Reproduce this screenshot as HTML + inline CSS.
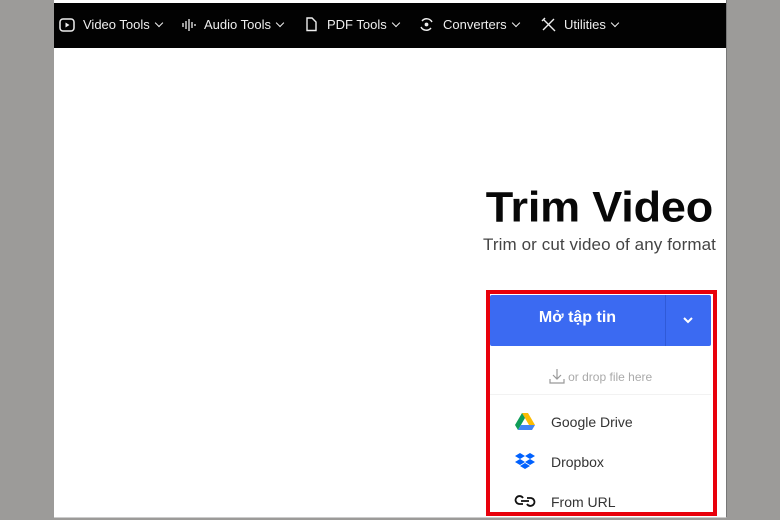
<!DOCTYPE html>
<html><head><style>
body{margin:0;width:780px;height:520px;background:#9c9b99;position:relative;overflow:hidden;font-family:"Liberation Sans",sans-serif}
.page{position:absolute;left:54px;top:0;width:672px;height:517px;background:#fff;border-right:1px solid #777;border-bottom:1px solid #ccc}
.nav{position:absolute;left:0;top:3px;width:672px;height:45px;background:#020202;color:#eee;font-size:13px}
.nav span{position:absolute;top:14px;white-space:nowrap}
.nav svg{position:absolute}
.nav i{display:inline-block;width:5px;height:5px;border-right:1.2px solid #eee;border-bottom:1.2px solid #eee;transform:rotate(45deg);margin-left:6px;vertical-align:3px}
h1{position:absolute;right:13px;top:181px;margin:0;font-size:45px;font-weight:bold;color:#080808;letter-spacing:-0.2px;transform:scaleY(0.95)}
.sub{position:absolute;right:10px;top:235px;font-size:17px;color:#444;letter-spacing:0.1px}
.red{position:absolute;left:486px;top:290px;width:223px;height:218px;border:4px solid #e8000b;background:#fff}
.btn{position:absolute;left:0;top:1px;width:221px;height:51px;background:#3b6af2;border-radius:2px}
.btn .t{position:absolute;left:0;width:175px;top:14px;text-align:center;color:#fff;font-weight:bold;font-size:16px}
.btn .d{position:absolute;left:175px;top:0;width:1px;height:51px;background:#2f5ad8}
.drop{position:absolute;left:0;width:221px;top:74px;text-align:center;color:#aaa;font-size:12px}
.it{position:absolute;left:61px;font-size:14px;color:#333}
</style></head><body>
<div class="page">
<div class="nav">
<svg style="left:5px;top:15px" width="16" height="14" viewBox="0 0 16 14"><rect x="1" y="1" width="14" height="12" rx="3" fill="none" stroke="#eee" stroke-width="1.5"/><path d="M6.5 4.5v5l4-2.5z" fill="#eee"/></svg>
<span style="left:29px">Video Tools<i></i></span>
<svg style="left:128px;top:15px" width="14" height="14" viewBox="0 0 14 14" stroke="#eee" stroke-width="1.3"><path d="M1 5v4M4 3v8M7 1v12M10 4v6M13 6v2"/></svg>
<span style="left:150px">Audio Tools<i></i></span>
<svg style="left:251px;top:14px" width="13" height="15" viewBox="0 0 13 15"><path d="M2 1h5l4 4v8.5H2z" fill="none" stroke="#eee" stroke-width="1.4"/></svg>
<span style="left:273px">PDF Tools<i></i></span>
<svg style="left:365px;top:14px" width="15" height="15" viewBox="0 0 15 15" fill="none" stroke="#eee" stroke-width="1.4"><path d="M3 4A6 6 0 0 1 13 5M12 11A6 6 0 0 1 2 10"/><circle cx="7.5" cy="7.5" r="1.2" fill="#eee"/></svg>
<span style="left:389px">Converters<i></i></span>
<svg style="left:487px;top:14px" width="15" height="15" viewBox="0 0 15 15" fill="none" stroke="#eee" stroke-width="1.4"><path d="M2 2l11 11M13 2L2 13M1 4l3-3M11 11l3 3"/></svg>
<span style="left:510px">Utilities<i></i></span>
</div>
<h1>Trim Video</h1>
<div class="sub">Trim or cut video of any format</div>
</div>
<div class="red">
<div class="btn"><div class="t">Mở tập tin</div><div class="d"></div>
<svg style="position:absolute;left:192px;top:21px" width="12" height="8" viewBox="0 0 12 8"><path d="M2 2l4 4 4-4" fill="none" stroke="#fff" stroke-width="2"/></svg></div>
<div class="drop"><svg width="16" height="16" viewBox="0 0 16 16" style="vertical-align:-3px" fill="none" stroke="#999" stroke-width="1.2"><path d="M8 1v10M4 7l4 4 4-4M1 11v4h14v-4"/></svg> or drop file here</div>
<div style="position:absolute;left:0;top:100px;width:221px;height:1px;background:#f2f2f2"></div>
<svg style="position:absolute;left:25px;top:119px" width="20" height="17" viewBox="0 0 20 17"><path d="M7 0h6l7 12h-6z" fill="#fbbc04"/><path d="M7 0l-7 12 3 5 7-12z" fill="#0f9d58"/><path d="M3 17h14l3-5H6z" fill="#4285f4"/></svg>
<div class="it" style="top:120px">Google Drive</div>
<svg style="position:absolute;left:24px;top:159px" width="22" height="18" viewBox="0 0 22 18" fill="#0061fe"><path d="M6 0l5 3-5 3-5-3zM16 0l5 3-5 3-5-3zM1 9l5-3 5 3-5 3zM11 9l5-3 5 3-5 3zM6 13l5-3 5 3-5 3z"/></svg>
<div class="it" style="top:160px">Dropbox</div>
<svg style="position:absolute;left:24px;top:199px" width="22" height="16" viewBox="0 0 22 16" fill="none" stroke="#111" stroke-width="1.8"><path d="M9 5a4 4 0 1 0-4 6h4M13 11a4 4 0 1 0 4-6h-4M7 8h8"/></svg>
<div class="it" style="top:200px">From URL</div>
</div>
</body></html>
